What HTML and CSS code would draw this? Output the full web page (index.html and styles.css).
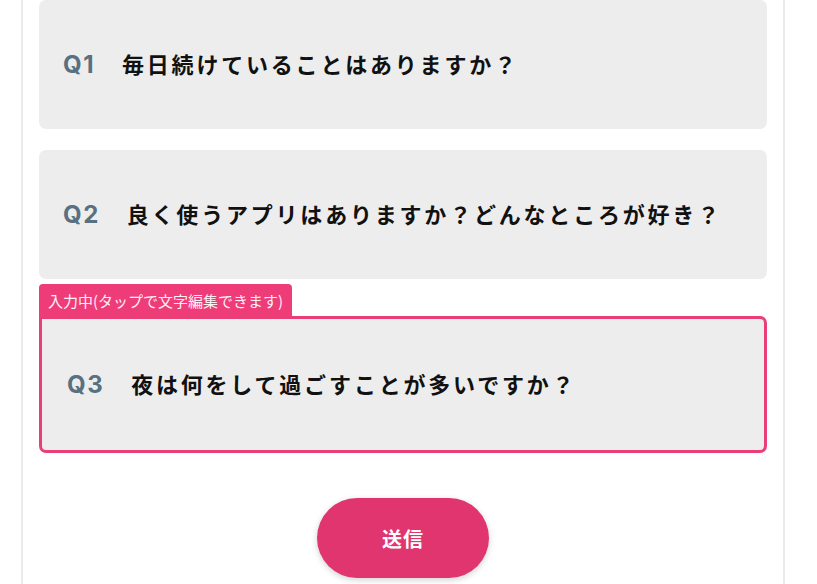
FILE: index.html
```html
<!DOCTYPE html>
<html lang="ja">
<head>
<meta charset="utf-8">
<link rel="stylesheet" href="styles.css">
</head>
<body>
<div class="page">
  <div class="card">
    <div class="q-row">
      <span class="qnum">Q1</span>
      <span class="qtext">毎日続けていることはありますか？</span>
    </div>
  </div>
  <div class="card">
    <div class="q-row">
      <span class="qnum">Q2</span>
      <span class="qtext">良く使うアプリはありますか？どんなところが好き？</span>
    </div>
  </div>
  <div class="active-group">
    <div class="badge">入力中(タップで文字編集できます)</div>
    <div class="card card-active">
      <div class="q-row">
        <span class="qnum">Q3</span>
        <span class="qtext">夜は何をして過ごすことが多いですか？</span>
      </div>
    </div>
  </div>
  <div class="actions">
    <button class="submit">送信</button>
  </div>
</div>
</body>
</html>
```

FILE: styles.css
```css
html, body {
  margin: 0;
  padding: 0;
  background: #ffffff;
}

body {
  font-family: "Noto Sans CJK JP", "Noto Sans", sans-serif;
  overflow: hidden;
}

.page {
  margin-left: 21px;
  width: 728px;
  padding: 0 16px 40px;
  border-left: 2px solid #ebebeb;
  border-right: 2px solid #ebebeb;
  min-height: 620px;
}

.card {
  box-sizing: border-box;
  height: 129px;
  background: #ededed;
  border-radius: 7px;
  display: flex;
  align-items: center;
  padding-left: 24px;
  padding-bottom: 4px;
  margin-bottom: 21px;
}

.q-row {
  display: flex;
  align-items: baseline;
}

.qnum {
  font-family: "Inter", "Noto Sans", sans-serif;
  font-weight: 700;
  font-size: 24px;
  letter-spacing: 1.5px;
  color: #587080;
  margin-right: 27px;
}

.qtext {
  font-family: "Noto Sans CJK JP", sans-serif;
  font-weight: 700;
  font-size: 22px;
  letter-spacing: 2.8px;
  color: #111111;
}

.active-group {
  margin-top: -16px;
}

.badge {
  display: inline-block;
  height: 32px;
  line-height: 34px;
  padding: 0 9px;
  background: #ee3c78;
  color: #fff0f5;
  font-size: 15px;
  border-radius: 4px 4px 0 0;
}

.card-active {
  height: 137px;
  border: 3px solid #ea3f76;
  border-top-left-radius: 0;
  padding-left: 25px;
  margin-bottom: 0;
}

.actions {
  display: flex;
  justify-content: center;
  margin-top: 45px;
}

.submit {
  width: 172px;
  height: 80px;
  border: none;
  border-radius: 40px;
  background: #e0356f;
  color: #ffffff;
  font-family: "Noto Sans CJK JP", sans-serif;
  font-weight: 700;
  font-size: 20px;
  letter-spacing: 1px;
  box-shadow: 0 2px 6px rgba(0, 0, 0, 0.18);
}
```
